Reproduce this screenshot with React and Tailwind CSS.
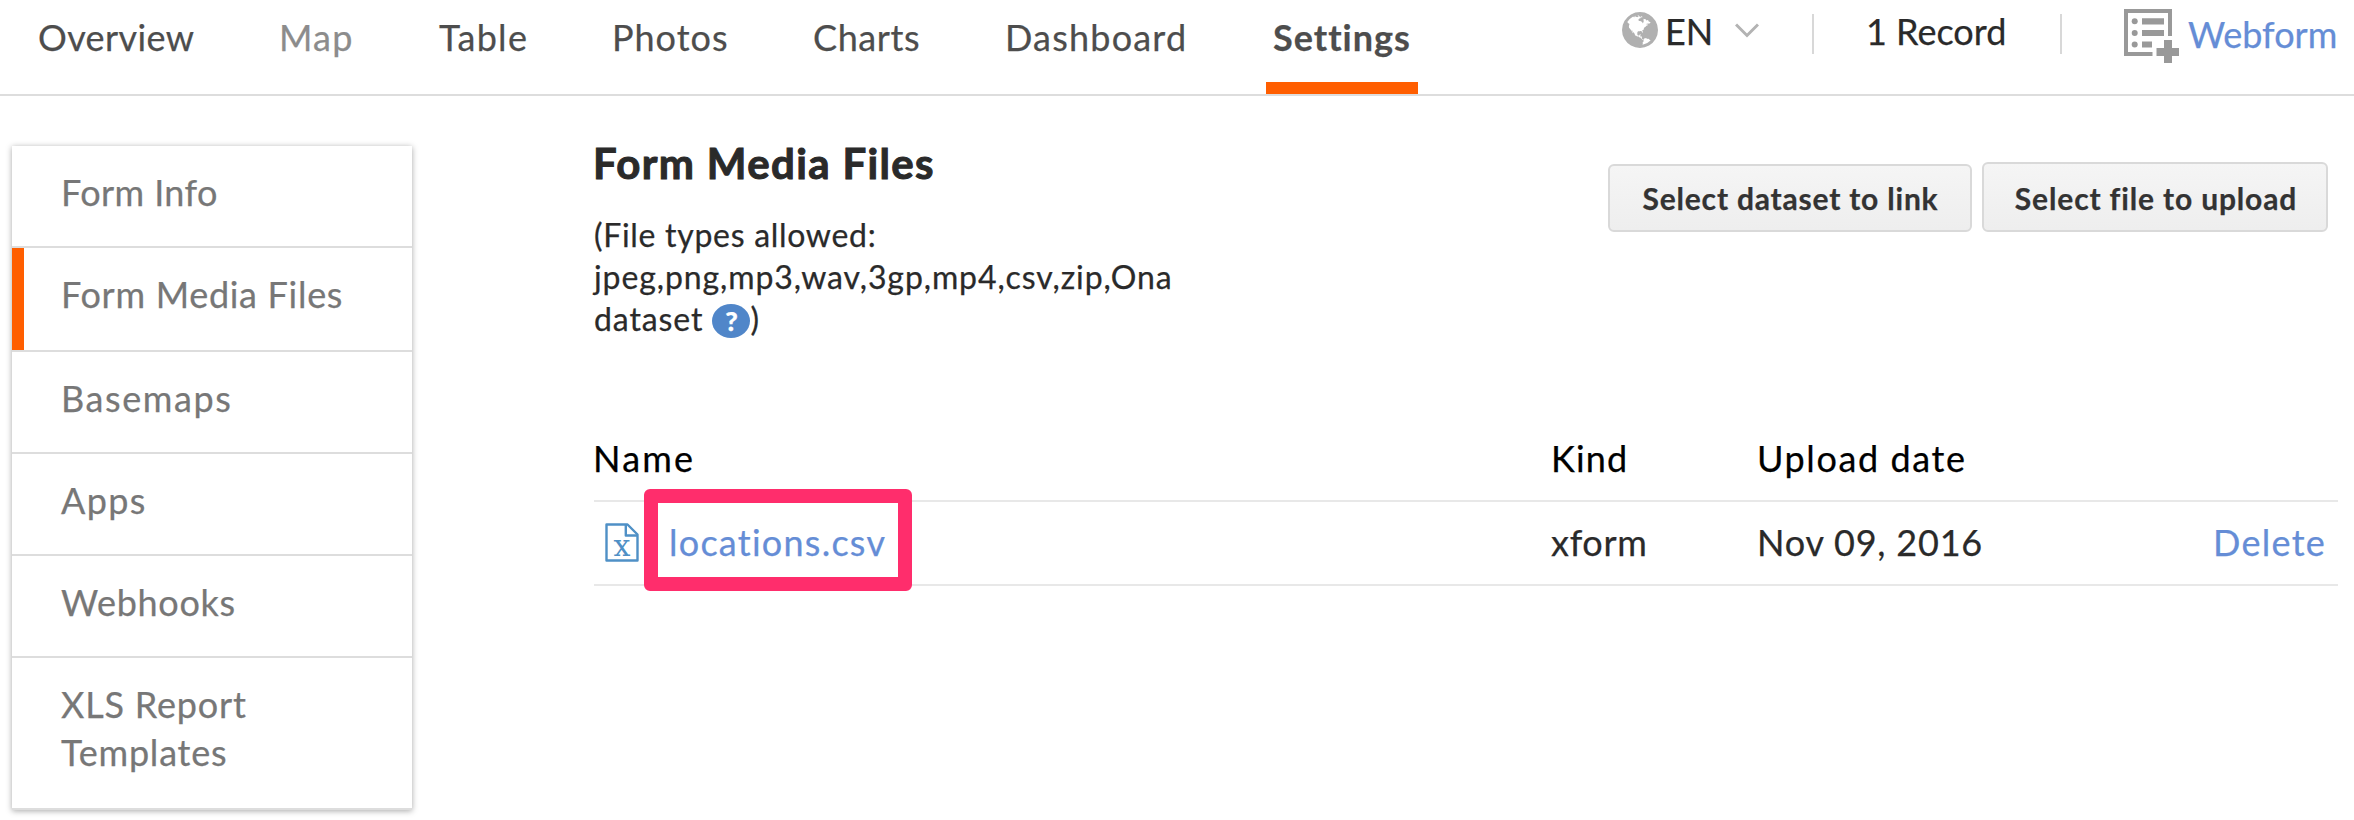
function GlobeIcon() {
  return (
    <svg className="h-9 w-9 shrink-0" viewBox="0 128 1536 1536" fill="#b0b0b0">
      <path d="M768 128q209 0 385.500 103t279.500 279.500 103 385.500-103 385.500-279.500 279.500-385.500 103-385.500-103-279.500-279.500-103-385.500 103-385.500 279.500-279.500 385.500-103zm274 521q-2 1-9.500 9.500t-13.500 9.500q2 0 4.500-5t5-11 3.500-7q6-7 22-15 14-6 52-12 34-8 51 11-2-2 9.500-13t14.500-12q3-2 15-4.500t15-7.500l2-22q-12 1-17.500-7t-6.500-21q0 2-6 8 0-7-4.500-8t-11.500 1-9 1q-10-3-15-7.500t-8-16.500-4-15q-2-5-9.500-10.500t-9.500-10.500q-1-2-2.500-5.500t-3-6.500-4-5.500-5.500-2.500-7 5-7.500 10-4.500 5q-3-2-6-1.500t-4.500 1-4.500 3-5 3.500q-3 2-8.500 3t-8.500 2q15-5-1-11-10-4-16-3 9-4 7.500-12t-8.500-14h5q-1-4-8.500-8.500t-17.500-8.500-13-6q-8-5-34-9.500t-33-.5q-5 6-4.500 10.500t4 14 3.500 12.500q1 6-5.500 13t-6.500 12q0 7 14 15.500t10 21.500q-3 8-16 16t-16 12q-5 8-1.500 18.500t10.500 16.500q2 2 1.500 4t-3.500 4.500-5.500 4-6.500 3.500l-3 2q-11 5-20.500-6t-13.500-26q-7-25-16-30-23-8-29 1-5-13-41-26-25-9-58-4 6-1 0-15-7-15-19-12 3-6 4-17.500t1-13.500q3-13 12-23 1-1 7-8.500t9.500-13.500.5-6q35 4 50-11 5-5 11.500-17t10.500-17q9-6 14-5.500t14.500 5.500 14.500 5q14 1 15.500-11t-7.500-20q12 1 3-17-4-7-8-9-12-4-27 5-8 4 2 8-1-1-9.500 10.500t-16.500 17.500-16-5q-1-1-5.500-13.500t-9.500-13.500q-8 0-16 15 3-8-11-15t-24-8q19-12-8-27-7-4-20.500-5t-19.500 4q-5 7-5.500 11.500t5 8 10.500 5.500 11.500 4 8.500 3q14 10 8 14-2 1-8.500 3.500t-11.500 4.500-6 4q-3 4 0 14t-2 14q-5-5-9-17.500t-7-16.500q7 9-25 6l-10-1q-4 0-16 2t-20.500 1-13.500-8q-4-8 0-20 1-4 4-2-4-3-11-9.500t-10-8.500q-46 15-94 41 6 1 12-1 5-2 13-6.500t10-5.500q34-14 42-7l5-5q14 16 20 25-7-4-30-1-20 6-22 12 7 12 5 18-4-3-11.500-10t-14.500-11-15-5q-16 0-22 1-146 80-235 222 7 7 12 8 4 1 5 9t2.500 11 11.500-3q9 8 3 19 1-1 44 27 19 17 21 21 3 11-10 18-1-2-9-9t-9-4q-3 5 .5 18.500t10.500 12.500q-7 0-9.500 16t-2.500 35.500-1 23.500l2 1q-3 12 5.500 34.500t21.500 19.500q-13 3 20 43 6 8 8 9 3 2 12 7.500t15 10 10 10.500q4 5 10 22.500t14 23.500q-2 6 9.500 20t10.500 23q-1 0-2.500 1t-2.500 1q3 7 15.500 14t15.500 13q1 3 2 10t3 11 8 2q2-20-24-62-15-25-17-29-3-5-5.500-15.500t-4.500-14.500q2 0 6 1.500t8.500 3.500 7.500 4 2 3q-3 7 2 17.500t12 18.500 17 19 12 13q6 6 14 19.500t0 13.500q9 0 20 10.500t17 19.500q5 8 8 26t5 24q2 7 8.500 13.500t12.500 9.500l16 8 13 7q5 2 18.500 10.500t21.500 11.500q10 4 16 4t14.500-2.500 13.500-3.500q15-2 29 15t21 21q36 19 55 11-2 1 .5 7.500t8 15.500 9 14.500 5.500 8.500q5 6 18 15t18 15q6-4 7-9-3 8 7 20t18 10q14-3 14-32-31 15-49-18 0-1-2.500-5.500t-4-8.500-2.500-8.500 0-7.500 5-3q9 0 10-3.500t-2-12.500-4-13q-1-8-11-20t-12-15q-5 9-16 8t-16-9q0 1-1.500 5.500t-1.500 6.500q-13 0-15-1 1-3 2.500-17.500t3.500-22.500q1-4 5.500-12t7.500-14.500 4-12.500-4.500-9.500-17.500-2.500q-19 1-26 20-1 3-3 10.500t-5 11.500-9 7q-7 3-24 2t-24-5q-13-8-22.500-29t-9.500-37q0-10 2.500-26.500t3-25-5.500-24.500q3-2 9-9.500t10-10.500q2-1 4.500-1.500t4.500 0 4-1.500 3-6q-1-1-4-3-3-3-4-3 7 3 28.500-1.500t27.500 1.500q15 11 22-2 0-1-2.500-9.500t-.5-13.500q5 27 29 9 3 3 15.500 5t17.500 5q3 2 7 5.500t5.500 4.500 5-.5 8.500-6.500q10 14 12 24 11 40 19 44 7 3 11 2t4.500-9.500 0-14-1.500-12.500l-1-8v-18l-1-8q-15-3-18.500-12t1.500-18.500 15-18.500q1-1 8-3.500t15.500-6.500 12.500-8q21-19 15-35 7 0 11-9-1 0-5-3t-7.500-5-4.500-2q9-5 2-16 5-3 7.500-11t7.500-10q9 12 21 2 8-8 1-16 5-7 20.500-10.500t18.500-9.500q7 2 8-2t1-12 3-12q4-5 15-9t13-5l17-11q3-4 0-4 18 2 31-11 10-11-6-20 3-6-3-9.500t-15-5.500q3-1 11.500-.5t10.500-1.500q15-10-7-17-17-5-43 12zm-163 877q206-36 351-189-3-3-12.500-4.500t-12.500-3.500q-18-7-24-8 1-7-2.500-13t-8-9-12.500-8-11-7q-2-2-7-6t-7-5.500-7.500-4.500-8.500-2-10 1l-3 1q-3 1-5.500 2.500t-5.500 3-4 3 0 2.500q-21-17-36-22-5-1-11-5.500t-10.500-7-10-1.500-11.500 7q-5 5-6 15t-2 13q-7-5 0-17.500t2-18.500q-3-6-10.500-4.500t-12 4.500-11.500 8.500-9 6.500-8.500 5.500-8.500 7.500q-3 4-6 12t-5 11q-2-4-11.500-6.500t-9.500-5.500q2 10 4 35t5 38q7 31-12 48-27 25-29 40-4 22 12 26 0 7-8 20.500t-7 21.500q0 6 2 16z" />
    </svg>
  );
}

function WebformIcon() {
  return (
    <svg className="h-[55px] w-14 shrink-0" viewBox="0 0 56 55" fill="#999">
      <path d="M0 0H48V27H44V4H4V43H28.500V47H0Z" />
      <circle cx="10.700" cy="12.300" r="3" />
      <circle cx="10.700" cy="24" r="3" />
      <circle cx="10.700" cy="35.500" r="3" />
      <path d="M18 9.300H40V15.500H18ZM18 21H40V27H18ZM18 32.500H28V38.500H18Z" />
      <path d="M40 31H48V39H55V47H48V54H40V47H32.500V39H40Z" />
    </svg>
  );
}

function SheetIcon() {
  return (
    <svg className="h-10 w-[34px] shrink-0" viewBox="0 0 34 40" fill="none" stroke="#4f90c6" strokeWidth="2.400" strokeLinejoin="round">
      <path d="M1.500 1.500H22.500L32.500 11.500V37.500H1.500Z" />
      <path d="M20.800 1.500V12.500H32.500" />
      <text x="17" y="33" textAnchor="middle" fontSize="30" fill="#4f90c6" stroke="none" fontFamily="'DejaVu Serif', serif">x</text>
    </svg>
  );
}

const menu = [
  { label: "Form Info", cls: "h-[102px] tracking-[0.4px]" },
  { label: "Form Media Files", cls: "h-[104px] tracking-[0.7px]", active: true },
  { label: "Basemaps", cls: "h-[102px] tracking-[1.6px]" },
  { label: "Apps", cls: "h-[102px] tracking-[1.4px]" },
  { label: "Webhooks", cls: "h-[102px] tracking-[0.7px]" },
  { label: "XLS Report Templates", cls: "h-[152px] tracking-[0.8px]" },
];

export default function App() {
  return (
    <div className="h-[820px] w-[2354px] overflow-hidden bg-white font-['Lato',sans-serif] text-[36px] leading-[48px] text-[#2a2a2a] [-webkit-text-stroke:0.25px]">
      <header className="flex h-24 items-start border-b-2 border-[#ddd] whitespace-nowrap">
        <nav className="grid h-[94px] shrink-0 grid-cols-[241px_160px_173px_201px_192px_261px_152px] pt-[13px] pl-[38px] text-[#4d4d4d]">
          <a className="tracking-[0.4px]">Overview</a>
          <a className="tracking-[1.2px] text-[#8c8c8c]">Map</a>
          <a className="tracking-[1.3px]">Table</a>
          <a className="tracking-[1px]">Photos</a>
          <a className="tracking-[0.6px]">Charts</a>
          <a className="tracking-[1.2px]">Dashboard</a>
          <a className="h-[81px] border-b-12 border-[#ff5e00] pl-[7px] font-bold tracking-[1px]">Settings</a>
        </nav>
        <div className="ml-auto flex w-[732px] shrink-0 items-start">
          <div className="mt-3"><GlobeIcon /></div>
          <span className="mt-[7px] ml-[7px] w-[71px]">EN</span>
          <svg className="mt-[22px] -ml-px h-4 w-6" viewBox="0 0 24 16" fill="none" stroke="#b3b3b3" strokeWidth="3">
            <path d="M1 2.500L12 13.500L23 2.500" />
          </svg>
          <div className="mt-3.5 ml-[53px] h-10 w-0.5 bg-[#d8d8d8]" />
          <span className="mt-[7px] ml-[52px] w-[194px]">1 Record</span>
          <div className="mt-3.5 h-10 w-0.5 bg-[#d8d8d8]" />
          <div className="mt-[9px] ml-[62px]"><WebformIcon /></div>
          <a className="mt-2.5 ml-2 text-[#658dd6]">Webform</a>
        </div>
      </header>

      <div className="flex items-start">
        <aside className="mt-[50px] ml-3 w-[400px] shrink-0 bg-white shadow-[0_1px_6px_rgba(0,0,0,0.35)]">
          {menu.map((m) => (
            <div key={m.label} className={"flex border-b-2 border-[#ddd] text-[#777] " + m.cls}>
              <div className={m.active ? "w-3 bg-[#ff5e00]" : "w-3"} />
              <a className="w-[250px] pt-[22px] pl-[37px] whitespace-nowrap">
                {m.label === "XLS Report Templates" ? <>XLS Report<br />Templates</> : m.label}
              </a>
            </div>
          ))}
        </aside>

        <main className="ml-[182px] w-[1744px] pt-[43px]">
          <div className="flex items-start justify-between whitespace-nowrap">
            <div>
              <h1 className="-ml-px text-[42px] font-bold tracking-[1.35px] [-webkit-text-stroke:1px]">Form Media Files</h1>
              <p className="mt-[27px] text-[32px] leading-[42px] tracking-[0.9px]">
                <span className="tracking-[0.7px]">(File types allowed:</span>
                <br />
                jpeg,png,mp3,wav,3gp,mp4,csv,zip,Ona
                <br />
                <span className="flex">
                  dataset
                  <span className="mt-[6px] ml-[9px] flex h-[34px] w-[38px] items-center justify-center rounded-[50%] bg-[#5086c9] text-[27px] leading-[34px] font-black tracking-normal text-white">?</span>
                  )
                </span>
              </p>
            </div>
            <div className="mt-[23px] mr-2.5 flex items-end gap-2.5 text-[30px] leading-10 font-bold text-[#333]">
              <button className="h-[68px] w-[364px] rounded-md border-2 border-[#d9d9d9] bg-linear-to-b from-[#f5f5f5] to-[#eee] pl-px tracking-[0.8px]">Select dataset to link</button>
              <button className="h-[70px] w-[346px] rounded-md border-2 border-[#d9d9d9] bg-linear-to-b from-[#f5f5f5] to-[#eee] pt-0.5 pl-0.5 tracking-[0.85px]">Select file to upload</button>
            </div>
          </div>

          <div className="mt-[94px] whitespace-nowrap">
            <div className="grid h-[68px] grid-cols-[957px_206px_455px_126px] border-b-2 border-[#e8e8e8] text-black">
              <span className="-ml-px tracking-[2.2px]">Name</span>
              <span className="tracking-[1.1px]">Kind</span>
              <span className="tracking-[1.6px]">Upload date</span>
            </div>
            <div className="grid h-[84px] grid-cols-[957px_206px_456px_125px] border-b-2 border-[#e8e8e8] pt-4">
              <div className="flex">
                <div className="mt-[5px] ml-[11px]"><SheetIcon /></div>
                <a className="relative ml-[30px] tracking-[1.25px] text-[#658dd6]">
                  locations.csv
                  <span className="absolute -top-[29px] -left-[25px] h-[102px] w-[268px] rounded-md border-14 border-[#ff2d6c]" />
                </a>
              </div>
              <span className="tracking-[0.7px]">xform</span>
              <span className="tracking-[0.8px]">Nov 09, 2016</span>
              <a className="tracking-[1.3px] text-[#658dd6]">Delete</a>
            </div>
          </div>
        </main>
      </div>
    </div>
  );
}
